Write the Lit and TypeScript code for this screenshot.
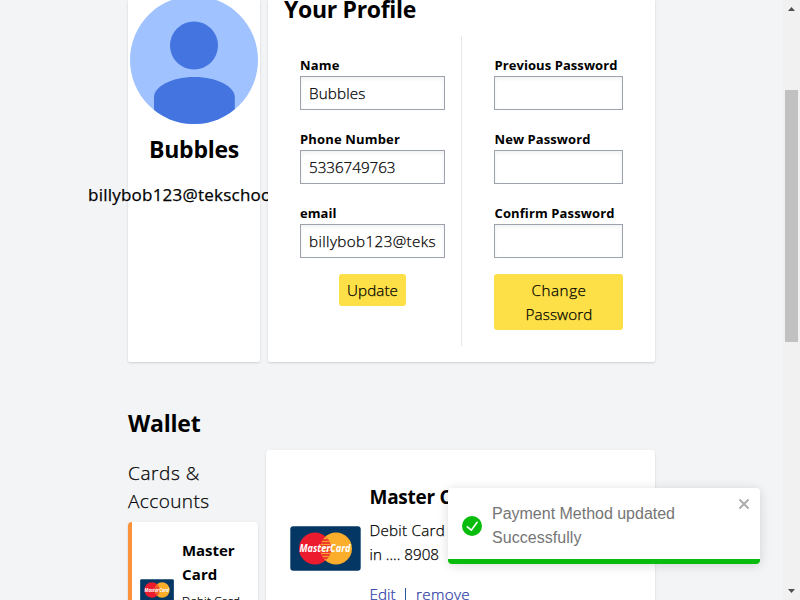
import { LitElement, html, css, svg } from "lit";
import { customElement, property } from "lit/decorators.js";

/* A single line of text tracked so that it fills a given width. */
@customElement("fit-text")
class FitText extends LitElement {
  @property() text = "";
  @property({ type: Number }) w = 0;

  static styles = css`
    :host { display: inline-block; white-space: pre; text-align: left; }
  `;

  render() {
    return html`<span>${this.text}</span>`;
  }

  updated() {
    const span = this.renderRoot.querySelector("span") as HTMLElement;
    span.style.letterSpacing = "0px";
    const natural = span.getBoundingClientRect().width;
    const gap = (this.w - natural) / this.text.length;
    span.style.letterSpacing = gap.toFixed(3) + "px";
  }
}

const fit = (text: string, w: number) => html`<fit-text .text=${text} .w=${w}></fit-text>`;

@customElement("master-logo")
class MasterLogo extends LitElement {
  static styles = css`
    :host { display: block; }
    svg { display: block; width: 100%; height: 100%; }
    text { font: italic 700 10.5px "Open Sans", sans-serif; fill: #fff; -webkit-text-stroke: 0; }
  `;

  render() {
    const bars = [14, 17, 20, 23, 26, 29, 32].map(
      (y) => svg`<path d="M28 ${y}h14" stroke="#ed1b2e" stroke-width="1.6"/>`
    );
    return html`<svg viewBox="0 0 71 45" preserveAspectRatio="none">
      <rect x=".3" y=".3" width="70.4" height="44.4" rx="3" fill="#043763"/>
      <circle cx="46" cy="22.5" r="16" fill="#fbae2c"/>
      <circle cx="25" cy="22.5" r="16" fill="#ed1b2e"/>
      <clipPath id="lens"><path d="M35.500 10.500a16 16 0 0 1 0 24a16 16 0 0 1 0-24z"/></clipPath>
      <g clip-path="url(#lens)"><rect x="28" y="8" width="14" height="30" fill="#f9a02c"/>${bars}</g>
      <text x="9.500" y="26.300" textLength="51" lengthAdjust="spacingAndGlyphs">MasterCard</text>
    </svg>`;
  }
}

@customElement("app-root")
class AppRoot extends LitElement {
  static styles = css`
    :host {
      display: block; position: relative; width: 800px; height: 600px; overflow: hidden;
      background: #f3f4f6; color: #000;
      font-family: "Open Sans", "Noto Sans", sans-serif; font-size: 15.2px; font-weight: 300; line-height: 24px;
      -webkit-text-stroke: 0.25px currentColor;
    }
    * { box-sizing: border-box; }
    .window { display: flex; justify-content: space-between; height: 600px; }
    .page { width: 655px; padding-left: 128px; }
    .card { background: #fff; box-shadow: 0 1px 3px rgba(0,0,0,.1), 0 1px 2px rgba(0,0,0,.06); }
    .profile { display: grid; grid-template-columns: 132px 387px; gap: 8px; width: 527px; height: 362px; }
    .side { display: flex; flex-direction: column; align-items: center; border-radius: 0 0 2px 2px; }
    .avatar { display: block; width: 128px; height: 128px; margin-top: -4px; flex: none; }
    .name, .title, .heading, .label, .strong, .big { font-weight: 700; -webkit-text-stroke: 0; }
    .name { font-size: 23px; line-height: 32px; margin: 9px 0 16px; }
    .mail { font-size: 17px; font-weight: 400; line-height: 28px; width: 212px; }
    .main { position: relative; border-radius: 0 0 2px 2px; padding: 0 16px; }
    .title { font-size: 23px; line-height: 32px; margin-top: -7px; margin-bottom: 11px; }
    .forms { display: grid; grid-template-columns: 177px 178px; height: 310px; }
    .form { padding: 16px; display: flex; flex-direction: column; align-items: center; }
    .form + .form { border-left: 1px solid #e5e7eb; padding: 16px 16px 16px 32px; }
    .form + .form .label { padding-left: 0.5px; }
    .field { width: 100%; height: 58px; margin-bottom: 16px; display: flex; flex-direction: column; }
    .label { font-size: 13px; line-height: 24px; padding-top: 1px; height: 24px; }
    .input { height: 34px; border: 1px solid #9ca3af; padding: 4px 8px; overflow: hidden; box-shadow: inset 0 2px 4px rgba(0,0,0,.06); }
    .button { background: #fde047; border-radius: 3px; padding: 4px 8px; text-align: center; width: 67px; }
    .button.wide { width: 129px; height: 56px; display: flex; flex-direction: column; align-items: center; padding-left: 9px; }
    .heading { font-size: 23px; line-height: 32px; padding-top: 45px; height: 88px; }
    .wallet { display: grid; grid-template-columns: 130px 389px; gap: 8px; width: 527px; height: 150px; }
    .sub { font-size: 19px; line-height: 28px; padding-top: 9px; height: 72px; }
    .item { display: flex; height: 160px; border-left: 4px solid #fb923c; border-radius: 4px; padding-top: 16px; }
    .item master-logo { width: 34px; height: 22px; margin: 41px 8px 0 8px; }
    .strong { font-size: 15px; }
    .tiny { font-size: 11.5px; line-height: 16px; padding-top: 7px; }
    .item fit-text, .pay fit-text { display: block; }
    .pay { display: flex; border-radius: 4px; padding: 33px 24px; height: 200px; }
    .pay master-logo { width: 71px; height: 45px; margin: 43px 8.500px 0 0; }
    .big { font-size: 19px; line-height: 28px; margin-bottom: 7px; }
    .links { display: flex; margin-top: 16px; color: #3141a8; }
    .bar { width: 1.5px; height: 14px; background: #2a5a9c; margin: 6px 10px 0 9px; }
    .toast {
      position: absolute; left: 448px; top: 488px; width: 312px; height: 76px; background: #fff; border-radius: 4px;
      overflow: hidden; color: #757575; font: 400 16px/24px "Liberation Sans", sans-serif; display: flex; padding: 14px;
      -webkit-text-stroke: 0;
    }
    .shadow { position: absolute; left: 448px; top: 488px; width: 312px; height: 76px; border-radius: 4px; box-shadow: 0 1px 10px rgba(0,0,0,.1), 0 2px 15px rgba(0,0,0,.05); }
    .toast::after { content: ""; position: absolute; left: 0; right: 0; bottom: 0; height: 5px; background: #07bc0c; }
    .toast fit-text { display: block; }
    .tick { width: 20px; height: 20px; margin: 14px 10px 0 0; }
    .close { position: absolute; left: 290px; top: 10px; width: 12px; height: 12px; }
    .scroll { width: 17px; height: 600px; background: #f1f1f1; display: flex; flex-direction: column; align-items: center; }
    .scroll svg { width: 17px; height: 17px; display: block; }
    .track { flex: 1; width: 13px; padding-top: 73px; }
    .thumb { height: 252px; background: #c1c1c1; }
  `;

  field(label: string, lw: number, value = "", vw = 0) {
    return html`<div class="field">
      <div class="label">${fit(label, lw)}</div>
      <div class="input">${value ? fit(value, vw) : ""}</div>
    </div>`;
  }

  render() {
    return html`
      <div class="window">
        <div class="page">
          <div class="profile">
            <div class="card side">
              <svg class="avatar" viewBox="0 0 128 128">
                <clipPath id="disc"><circle cx="64" cy="64" r="64"/></clipPath>
                <circle cx="64" cy="64" r="64" fill="#a0c2ff"/>
                <circle cx="64" cy="49.500" r="24" fill="#4374e0"/>
                <path clip-path="url(#disc)" d="M24 128V101C24 91 41 81 64.300 81S104.800 91 104.800 101V128z" fill="#4374e0"/>
              </svg>
              <div class="name">${fit("Bubbles", 90)}</div>
              <div class="mail">${fit("billybob123@tekschool", 188)}</div>
            </div>
            <div class="card main">
              <div class="title">${fit("Your Profile", 132)}</div>
              <div class="forms">
                <div class="form">
                  ${this.field("Name", 39.5, "Bubbles", 56.5)}
                  ${this.field("Phone Number", 100, "5336749763", 86.5)}
                  ${this.field("email", 36.5, "billybob123@teks", 127)}
                  <div class="button">${fit("Update", 51)}</div>
                </div>
                <div class="form">
                  ${this.field("Previous Password", 123)}
                  ${this.field("New Password", 96)}
                  ${this.field("Confirm Password", 120)}
                  <div class="button wide">${fit("Change", 55)}${fit("Password", 67)}</div>
                </div>
              </div>
            </div>
          </div>
          <div class="heading">${fit("Wallet", 72.5)}</div>
          <div class="wallet">
            <div>
              <div class="sub">${fit("Cards &", 72)}<br>${fit("Accounts", 81.5)}</div>
              <div class="card item">
                <master-logo></master-logo>
                <div>
                  <div class="strong">${fit("Master", 52.5)}${fit("Card", 35.5)}</div>
                  <div class="tiny">${fit("Debit Card", 58)}</div>
                </div>
              </div>
            </div>
            <div class="card pay">
              <master-logo></master-logo>
              <div>
                <div class="big">${fit("Master Card", 113)}</div>
                ${fit("Debit Card", 75.5)}
                ${fit("in .... 8908", 69.5)}
                <div class="links">${fit("Edit", 26)}<span class="bar"></span>${fit("remove", 54)}</div>
              </div>
            </div>
          </div>
        </div>
        <div class="scroll">
          <svg viewBox="0 0 17 17"><path d="M5 11L8.500 7L12 11z" fill="#505050"/></svg>
          <div class="track"><div class="thumb"></div></div>
          <svg viewBox="0 0 17 17"><path d="M5 6L8.500 10L12 6z" fill="#505050"/></svg>
        </div>
      </div>
      <div class="shadow"></div>
      <div class="toast">
        <svg class="tick" viewBox="0 0 24 24"><path fill="#07bc0c" d="M12 0a12 12 0 1012 12A12.014 12.014 0 0012 0zm6.927 8.200l-6.845 9.289a1.011 1.011 0 01-1.430.188l-4.888-3.908a1 1 0 111.250-1.562l4.076 3.261 6.227-8.451a1 1 0 111.610 1.183z"/></svg>
        <div>${fit("Payment Method updated", 183)}${fit("Successfully", 89.5)}</div>
        <svg class="close" viewBox="0 0 12 12"><path d="M1.500 1.500L10.500 10.500M10.500 1.500L1.500 10.500" stroke="#acacac" stroke-width="2"/></svg>
      </div>
    `;
  }
}
